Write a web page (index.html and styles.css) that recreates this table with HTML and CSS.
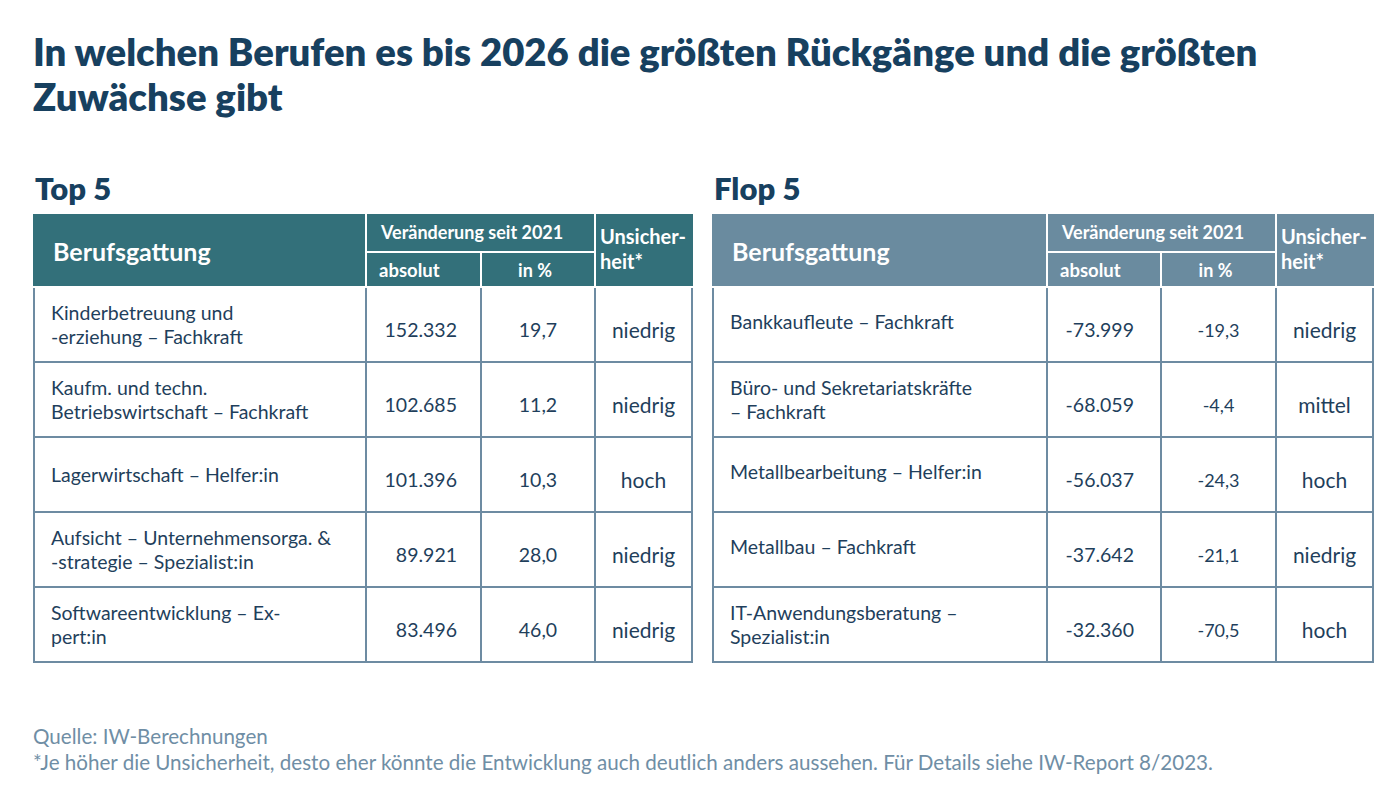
FILE: index.html
```html
<!DOCTYPE html>
<html lang="de">
<head>
<meta charset="utf-8">
<title>Berufe bis 2026</title>
<link rel="stylesheet" href="styles.css">
</head>
<body>
<main class="page">
  <h1 class="title">In welchen Berufen es bis 2026 die größten Rückgänge und die größten Zuwächse gibt</h1>
  <div class="tables">
    <section class="block">
      <h2 class="subtitle">Top 5</h2>
      <table class="tbl tbl-top">
        <colgroup><col class="c1"><col class="c2"><col class="c3"><col class="c4"></colgroup>
        <thead>
          <tr class="h1row">
            <th rowspan="2" class="th-name">Berufsgattung</th>
            <th colspan="2" class="th-group">Veränderung seit 2021</th>
            <th rowspan="2" class="th-unc">Unsicher-<br>heit*</th>
          </tr>
          <tr class="h2row">
            <th class="th-abs">absolut</th>
            <th class="th-pct">in %</th>
          </tr>
        </thead>
        <tbody>
          <tr><td class="name">Kinderbetreuung und<br>-erziehung – Fachkraft</td><td class="abs">152.332</td><td class="pct">19,7</td><td class="unc">niedrig</td></tr>
          <tr><td class="name">Kaufm. und techn.<br>Betriebswirtschaft – Fachkraft</td><td class="abs">102.685</td><td class="pct">11,2</td><td class="unc">niedrig</td></tr>
          <tr><td class="name">Lagerwirtschaft – Helfer:in</td><td class="abs">101.396</td><td class="pct">10,3</td><td class="unc">hoch</td></tr>
          <tr><td class="name">Aufsicht – Unternehmensorga. &amp;<br>-strategie – Spezialist:in</td><td class="abs">89.921</td><td class="pct">28,0</td><td class="unc">niedrig</td></tr>
          <tr><td class="name">Softwareentwicklung – Ex-<br>pert:in</td><td class="abs">83.496</td><td class="pct">46,0</td><td class="unc">niedrig</td></tr>
        </tbody>
      </table>
    </section>
    <section class="block">
      <h2 class="subtitle">Flop 5</h2>
      <table class="tbl tbl-flop">
        <colgroup><col class="c1"><col class="c2"><col class="c3"><col class="c4"></colgroup>
        <thead>
          <tr class="h1row">
            <th rowspan="2" class="th-name">Berufsgattung</th>
            <th colspan="2" class="th-group">Veränderung seit 2021</th>
            <th rowspan="2" class="th-unc">Unsicher-<br>heit*</th>
          </tr>
          <tr class="h2row">
            <th class="th-abs">absolut</th>
            <th class="th-pct">in %</th>
          </tr>
        </thead>
        <tbody>
          <tr><td class="name up">Bankkaufleute – Fachkraft</td><td class="abs">-73.999</td><td class="pct small">-19,3</td><td class="unc">niedrig</td></tr>
          <tr><td class="name">Büro- und Sekretariatskräfte<br>– Fachkraft</td><td class="abs">-68.059</td><td class="pct small">-4,4</td><td class="unc">mittel</td></tr>
          <tr><td class="name up">Metallbearbeitung – Helfer:in</td><td class="abs">-56.037</td><td class="pct small">-24,3</td><td class="unc">hoch</td></tr>
          <tr><td class="name up">Metallbau – Fachkraft</td><td class="abs">-37.642</td><td class="pct small">-21,1</td><td class="unc">niedrig</td></tr>
          <tr><td class="name">IT-Anwendungsberatung –<br>Spezialist:in</td><td class="abs">-32.360</td><td class="pct small">-70,5</td><td class="unc">hoch</td></tr>
        </tbody>
      </table>
    </section>
  </div>
  <footer class="notes">
    <p>Quelle: IW-Berechnungen</p>
    <p>*Je höher die Unsicherheit, desto eher könnte die Entwicklung auch deutlich anders aussehen. Für Details siehe IW-Report 8/2023.</p>
  </footer>
</main>
</body>
</html>
```

FILE: styles.css
```css
* { box-sizing: border-box; }
html, body { margin: 0; padding: 0; background: #ffffff; }
body { font-family: "Lato", "Liberation Sans", sans-serif; color: #1f3f5c; }

.page { padding: 29px 0 0 33px; width: 1400px; height: 788px; }

.title {
  margin: 0;
  width: 1300px;
  font-size: 38.3px;
  line-height: 45px;
  font-weight: 800;
  color: #17405f;
}

.tables { display: flex; gap: 19px; margin-top: 52px; }
.block { display: flex; flex-direction: column; }

.subtitle {
  margin: 0 0 9px 2px;
  font-size: 31px;
  line-height: 34px;
  font-weight: 800;
  color: #17405f;
}

.tbl {
  border-collapse: collapse;
  table-layout: fixed;
  width: 658px;
}
.tbl-flop { width: 660px; }
.tbl-top .c1 { width: 332px; }
.tbl-top .c2 { width: 115px; }
.tbl-top .c3 { width: 114px; }
.tbl-top .c4 { width: 97px; }
.tbl-flop .c1 { width: 334px; }
.tbl-flop .c2 { width: 114px; }
.tbl-flop .c3 { width: 115px; }
.tbl-flop .c4 { width: 97px; }

.tbl th {
  color: #ffffff;
  font-weight: 700;
  border: 2px solid #ffffff;
  padding: 0;
}
.tbl-top th { background: #33707a; }
.tbl-flop th { background: #6a8b9f; }
.tbl-top thead tr:first-child th { border-top-color: #33707a; }
.tbl-flop thead tr:first-child th { border-top-color: #6a8b9f; }
.tbl-top th.th-name { border-left-color: #33707a; }
.tbl-flop th.th-name { border-left-color: #6a8b9f; }
.tbl-top th.th-unc { border-right-color: #33707a; }
.tbl-flop th.th-unc { border-right-color: #6a8b9f; }

.h1row { height: 37px; }
.h2row { height: 35px; }

.th-name { text-align: left; padding-left: 18px !important; font-size: 25px; }
.th-group { font-size: 18px; font-weight: 700; text-align: left; padding-left: 14px !important; padding-bottom: 3px !important; }
.th-unc { text-align: left; padding-left: 4px !important; font-size: 20px; line-height: 25px; padding-bottom: 4px !important; }
.th-abs { text-align: left; padding-left: 12px !important; font-size: 18.5px; }
.th-pct { text-align: center; font-size: 18px; padding-right: 6px !important; }

.tbl td {
  border: 2px solid #6d8ba2;
  height: 75px;
  font-size: 19.5px;
  line-height: 24px;
  vertical-align: middle;
  padding: 0;
}
.tbl td.name { padding-left: 16px; }
.tbl td.name.up { padding-bottom: 5px; }
.tbl td.abs { text-align: right; padding: 10px 23px 0 0; }
.tbl-flop td.abs { padding-right: 26px; }
.tbl td.pct { text-align: center; padding-top: 10px; }
.tbl td.pct.small { font-size: 18px; }
.tbl td.unc { text-align: center; padding-top: 10px; font-size: 21px; }

.notes { margin-top: 60px; color: #6f8ea5; font-size: 20.6px; line-height: 26px; font-weight: 400; }
.notes p { margin: 0; }
```
